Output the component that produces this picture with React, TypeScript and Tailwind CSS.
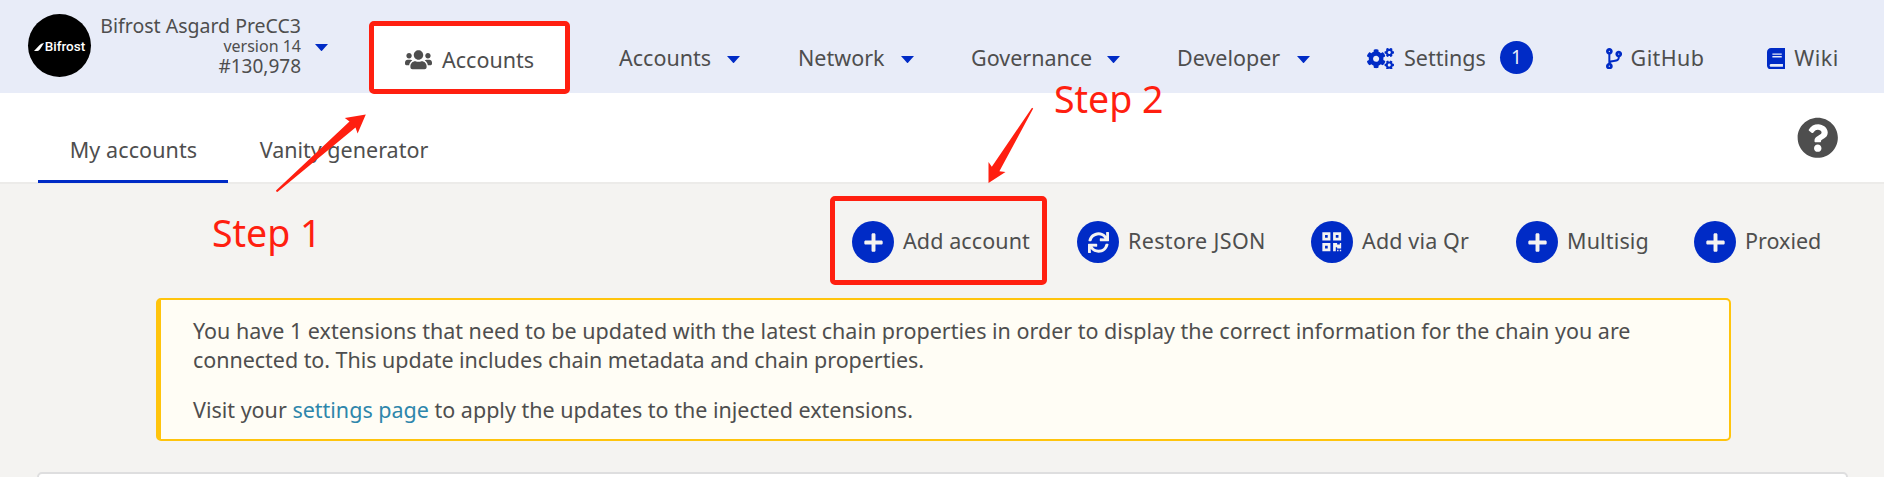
import type { ReactNode } from 'react';
import { FaBook, FaCodeBranch, FaCogs, FaPlus, FaQrcode, FaQuestionCircle, FaSync, FaUsers } from 'react-icons/fa';

function Caret() {
  return (
    <svg className="mt-[3px] h-[7px] w-[13px] shrink-0 fill-[#002bc6]" viewBox="0 0 13 7" preserveAspectRatio="none">
      <path d="M0 0H13L7 6.8Q6.5 7.2 6 6.8Z" />
    </svg>
  );
}

function MenuItem({ label, className }: { label: string; className: string }) {
  return (
    <div className={`flex shrink-0 items-center justify-between pr-[57px] ${className}`}>
      <span>{label}</span>
      <Caret />
    </div>
  );
}

function Action({ icon, label, className }: { icon: ReactNode; label: string; className: string }) {
  return (
    <div className={`flex shrink-0 items-center gap-[9px] whitespace-nowrap ${className}`}>
      <span className="flex size-[42px] shrink-0 items-center justify-center rounded-full bg-[#002bc6] text-[#f5f3f1]">
        {icon}
      </span>
      <span className="-mt-[3px]">{label}</span>
    </div>
  );
}

function ChainInfo() {
  return (
    <div className="flex w-[328px] shrink-0 items-center pb-[2px] pl-7">
      <div className="flex size-[63px] shrink-0 items-center justify-center rounded-full bg-black pt-[2px] font-['Roboto',sans-serif] text-[13.5px] leading-none font-medium text-white">
        <svg className="mt-px mr-px h-[8px] w-[10px] shrink-0 fill-white" viewBox="0 0 10 8">
          <path d="M0 8L5.4 2.3Q7 .6 10 0L6 6.2Q5 8 3.4 8Z" />
        </svg>
        <span>Bifrost</span>
      </div>
      <div className="flex w-[210px] flex-col items-end whitespace-nowrap">
        <span className="text-[19.5px] leading-[22px]">Bifrost Asgard PreCC3</span>
        <span className="text-[16px] leading-[18px]">version 14</span>
        <span className="text-[19px] leading-[22px]">#130,978</span>
      </div>
      <div className="mt-[1px] ml-[14px] flex">
        <Caret />
      </div>
    </div>
  );
}

export default function App() {
  return (
    <div className="relative h-[477px] w-[1884px] overflow-hidden bg-[#f4f3f1] font-['Noto_Sans','Open_Sans',sans-serif] text-[21.5px] leading-[29px] text-[#4e4e4e]">
      <header className="flex h-[93px] bg-[#e8ecf8]">
        <ChainInfo />
        <div className="ml-[41px] flex h-full w-[201px] shrink-0 items-center pt-[26px] pl-[3px]">
          <div className="-mt-[1px] flex h-[68px] w-[195px] items-center gap-[10px] rounded-t bg-white pl-[33px]">
            <FaUsers className="mt-[1px] h-[21.6px] w-[27px]" />
            <span>Accounts</span>
          </div>
        </div>
        <nav className="ml-[49px] flex pt-[22px] whitespace-nowrap">
          <MenuItem label="Accounts" className="w-[179px] pr-[58px]" />
          <MenuItem label="Network" className="w-[173px]" />
          <MenuItem label="Governance" className="w-[206px]" />
          <MenuItem label="Developer" className="w-[190px]" />
          <div className="flex w-[238.5px] shrink-0 items-center">
            <FaCogs className="mt-[2px] h-[21.6px] w-[27px] text-[#002bc6]" />
            <span className="ml-[10px]">Settings</span>
            <span className="ml-[14px] flex size-[33px] items-center justify-center rounded-full bg-[#002bc6] text-[19px] text-[#e8ecf8]">1</span>
          </div>
          <div className="flex w-[161px] shrink-0 items-center">
            <FaCodeBranch className="mt-[2px] h-[21.5px] w-[16.1px] text-[#002bc6]" />
            <span className="ml-[9px] tracking-[0.4px]">GitHub</span>
          </div>
          <div className="flex shrink-0 items-center">
            <FaBook className="mt-[2px] h-[21.5px] w-[18.8px] text-[#002bc6]" />
            <span className="ml-[9px] tracking-[0.5px]">Wiki</span>
          </div>
        </nav>
      </header>

      <div className="flex h-[91px] items-start border-b-2 border-[#ecebe9] bg-white pl-[38px]">
        <div className="flex h-[90px] w-[190px] justify-center border-b-[3px] border-[#002bc6] pt-[42px] pl-px">
          <span className="tracking-[0.1px]">My accounts</span>
        </div>
        <div className="flex h-[90px] w-[232px] justify-center pt-[42px]">Vanity generator</div>
        <FaQuestionCircle className="mt-[24px] mr-[46px] ml-auto size-[41.5px]" />
      </div>

      <div className="mt-[37px] flex pl-[852px]">
        <Action icon={<FaPlus className="size-[21px]" />} label="Add account" className="w-[225px] tracking-[0.1px]" />
        <Action icon={<FaSync className="size-[21px]" />} label="Restore JSON" className="w-[234px] tracking-[0.35px]" />
        <Action icon={<FaQrcode className="size-[21.5px]" />} label="Add via Qr" className="w-[205px] tracking-[0.15px]" />
        <Action icon={<FaPlus className="size-[21px]" />} label="Multisig" className="w-[178px] tracking-[0.15px]" />
        <Action icon={<FaPlus className="size-[21px]" />} label="Proxied" className="" />
      </div>

      <section className="mt-[35px] ml-[156px] h-[143px] w-[1575px] rounded-[5px] border-2 border-l-[5px] border-[#ffc40c] bg-[#fffdf5] pt-[16px] pr-8 pl-8">
        <p>
          You have 1 extensions that need to be updated with the latest chain properties in order to display the correct
          information for the chain you are <span className="tracking-[-0.04px]">connected to. This update includes chain metadata and chain properties.</span>
        </p>
        <p className="mt-[21px]">
          Visit your <a className="text-[#2e86ab]">settings page</a> to apply the updates to the injected extensions.
        </p>
      </section>

      <div className="mx-auto mt-[31px] h-[60px] w-[1811px] rounded-[5px] border-2 border-[#dededf] bg-white" />

      <div className="absolute top-[21px] left-[369px] h-[73px] w-[201px] rounded-[5px] border-[5px] border-[#ff1f10]" />
      <div className="absolute top-[196px] left-[830px] h-[89px] w-[217px] rounded-[5px] border-[5px] border-[#ff1f10]" />
      <svg className="absolute inset-0 fill-[#ff1f10]" width="1884" height="477" viewBox="0 0 1884 477">
        <path d="M276 190.6L349.5 121.6L344.8 118L365.8 114.5L357.6 133.4L355.5 127.6L277.4 191.9Q276 192 276 190.6Z" />
        <path d="M1032 107.7L991.8 166.8L988.5 162V182.9L1005.5 172L999.4 171.2L1033.2 108.5Z" />
      </svg>
      <span className="absolute top-[208px] left-[212px] text-[37.5px] leading-[50px] whitespace-nowrap text-[#ff1f10]">Step 1</span>
      <span className="absolute top-[74px] left-[1054px] text-[37.5px] leading-[50px] whitespace-nowrap text-[#ff1f10]">Step 2</span>
    </div>
  );
}
